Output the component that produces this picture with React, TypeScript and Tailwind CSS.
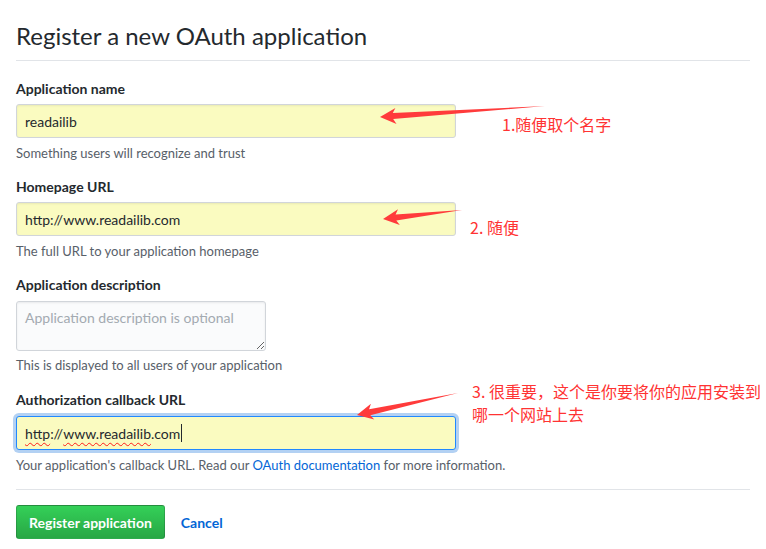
const font = { fontFamily: 'Lato, "Noto Sans", "Liberation Sans", sans-serif' };
const cjk = { fontFamily: '"Noto Sans CJK SC", sans-serif' };

type Pt = [number, number];

// builds a tapered arrow polygon (tip -> tail)
function arrowPoints(tip: Pt, tail: Pt) {
  const dx = tail[0] - tip[0];
  const dy = tail[1] - tip[1];
  const len = Math.hypot(dx, dy);
  const d: Pt = [dx / len, dy / len];
  const n: Pt = [-d[1], d[0]];
  const L = 16;
  const W = 8;
  const w = 3;
  const p = (a: number, b: number): Pt => [
    tip[0] + d[0] * a + n[0] * b,
    tip[1] + d[1] * a + n[1] * b,
  ];
  const pts: Pt[] = [tip, p(L, W), p(L - 3, w), tail, p(L - 3, -w), p(L, -W)];
  return pts.map((q) => q.map((v) => v.toFixed(1)).join(",")).join(" ");
}

function Field({
  label,
  value,
  help,
}: {
  label: string;
  value: string;
  help: string;
}) {
  return (
    <div>
      <label className="block text-[14px] font-bold leading-[21px] text-[#24292e] mb-[5px]">
        {label}
      </label>
      <input
        readOnly
        value={value}
        className="block w-[440px] h-[34px] px-[8px] text-[14px] text-[#24292e] bg-[#fafbc0] border border-[#d1d5da] rounded-[3px] shadow-[inset_0_1px_2px_rgba(27,31,35,0.075)] outline-none"
      />
      <p className="mt-[6px] text-[13px] leading-[18px] text-[#586069]">{help}</p>
    </div>
  );
}

export default function App() {
  return (
    <div className="relative w-[766px] h-[549px] bg-white overflow-hidden" style={font}>
      <div className="pl-[16px] pr-[16px] pt-[21px]">
        {/* heading */}
        <div className="pb-[9px] border-b border-[#e1e4e8]">
          <h1 className="text-[24px] leading-[30px] font-normal text-[#24292e]">
            Register a new OAuth application
          </h1>
        </div>

        <div className="mt-[17px] flex flex-col gap-[14px]">
          <Field
            label="Application name"
            value="readailib"
            help="Something users will recognize and trust"
          />
          <Field
            label="Homepage URL"
            value="http://www.readailib.com"
            help="The full URL to your application homepage"
          />

          <div>
            <label className="block text-[14px] font-bold leading-[21px] text-[#24292e] mb-[6px]">
              Application description
            </label>
            <textarea
              placeholder="Application description is optional"
              className="block w-[250px] h-[50px] px-[8px] py-[6px] text-[14px] leading-[20px] text-[#24292e] placeholder-[#a3aab1] bg-[#fafbfc] border border-[#d1d5da] rounded-[3px] shadow-[inset_0_1px_2px_rgba(27,31,35,0.075)] outline-none resize"
            />
            <p className="mt-[5px] text-[13px] leading-[18px] text-[#586069]">
              This is displayed to all users of your application
            </p>
          </div>

          <div className="mt-[1px]">
            <label className="block text-[14px] font-bold leading-[21px] text-[#24292e] mb-[6px]">
              Authorization callback URL
            </label>
            <div className="flex items-center w-[440px] h-[34px] px-[8px] text-[14px] text-[#24292e] bg-[#fafbc0] border border-[#2188ff] rounded-[3px] shadow-[0_0_0_3px_rgba(3,102,214,0.3)]">
              <span className="underline decoration-wavy decoration-[#ff1a1a] decoration-1 underline-offset-[3px]">
                http
              </span>
              <span>://</span>
              <span className="underline decoration-wavy decoration-[#ff1a1a] decoration-1 underline-offset-[3px]">
                www.readailib
              </span>
              <span>.com</span>
              <span className="inline-block w-[1px] h-[18px] bg-[#24292e] ml-[1px]" />
            </div>
            <p className="mt-[6px] text-[13px] leading-[18px] text-[#586069]">
              Your application's callback URL. Read our{" "}
              <a className="text-[#0366d6]">OAuth documentation</a> for more information.
            </p>
          </div>
        </div>

        <div className="mt-[15px] border-t border-[#e1e4e8] pt-[15px] flex items-center gap-[16px]">
          <button className="h-[34px] px-[12px] text-[14px] font-bold text-white rounded-[3px] border border-[rgba(27,31,35,0.2)] bg-gradient-to-b from-[#34d058] to-[#28a745]">
            Register application
          </button>
          <a className="text-[14px] font-bold text-[#0366d6]">Cancel</a>
        </div>
      </div>

      {/* annotations */}
      <svg className="absolute left-0 top-0 pointer-events-none" width="766" height="549">
        <polygon points={arrowPoints([380, 117], [545, 106])} fill="#ff3b3b" />
        <polygon points={arrowPoints([383, 219], [462, 210])} fill="#ff3b3b" />
        <polygon points={arrowPoints([357, 415], [458, 393])} fill="#ff3b3b" />
      </svg>
      <div className="absolute left-[502px] top-[113px] text-[16px] leading-[23px] text-[#ff3333]" style={cjk}>
        1.随便取个名字
      </div>
      <div className="absolute left-[470px] top-[216px] text-[16px] leading-[23px] text-[#ff3333]" style={cjk}>
        2. 随便
      </div>
      <div className="absolute left-[472px] top-[380px] text-[16px] leading-[23px] text-[#ff3333]" style={cjk}>
        <div>3. 很重要，这个是你要将你的应用安装到</div>
        <div>哪一个网站上去</div>
      </div>
    </div>
  );
}
